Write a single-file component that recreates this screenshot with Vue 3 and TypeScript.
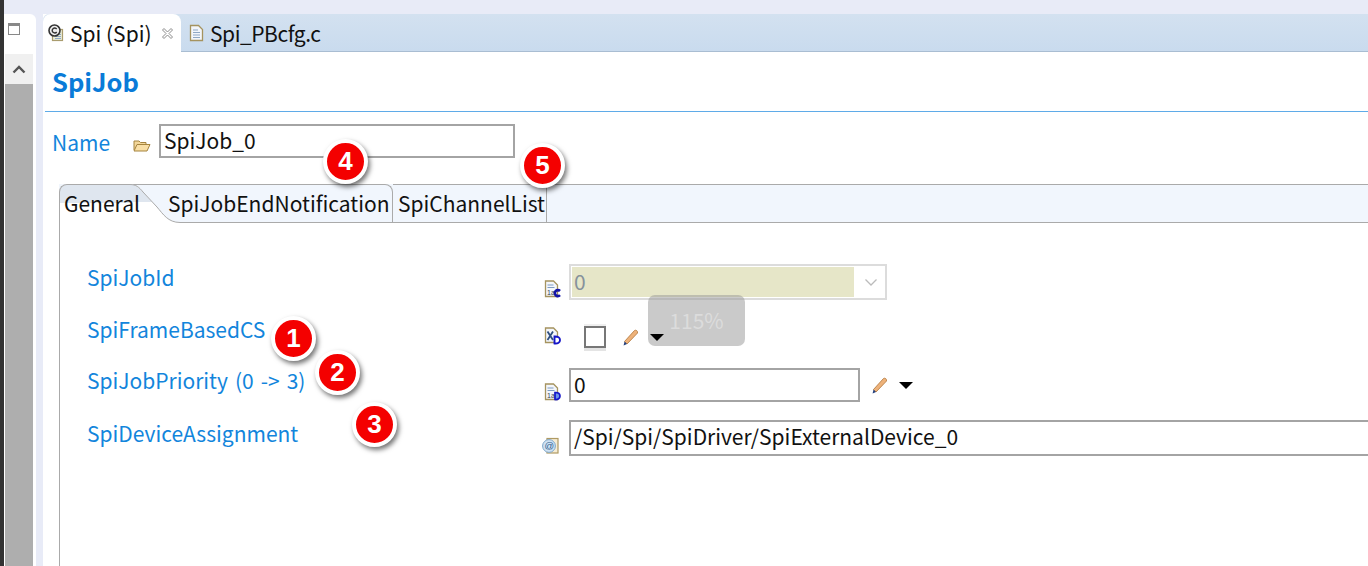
<script setup lang="ts">
const badges = [
  { n: 1, cls: 'b1' },
  { n: 2, cls: 'b2' },
  { n: 3, cls: 'b3' },
  { n: 4, cls: 'b4' },
  { n: 5, cls: 'b5' },
]
</script>

<template>
  <div class="root">
    <div class="dark"></div>
    <div class="shell">
      <div class="side">
        <div class="min"></div>
        <div class="scroll">
          <div class="sbtn">
            <svg width="14" height="9" viewBox="0 0 14 9"><path d="M1.5 7.5 7 2l5.500 5.500" fill="none" stroke="#555" stroke-width="2.400"/></svg>
          </div>
          <div class="thumb"></div>
        </div>
      </div>
      <div class="editor">
        <div class="etabs">
          <div class="etab active">
            <svg class="ico" width="17" height="18" viewBox="0 0 17 18">
              <rect x="4.500" y="5.500" width="10" height="11" fill="#e9edd8" stroke="#a99c6e" stroke-width="1.200"/>
              <path d="M7 10.500h6M7 12.500h6M7 14.500h6" stroke="#8fa7c4"/>
              <circle cx="6.500" cy="6.500" r="5.500" fill="#eee" stroke="#333" stroke-width="1.600"/>
              <path d="M8.700 5A2.500 2.500 0 1 0 8.700 8" fill="none" stroke="#333" stroke-width="1.400"/>
            </svg>
            <span class="t1">Spi (Spi)</span>
            <svg class="close" width="13" height="13" viewBox="0 0 13 13">
              <path d="M1.500 3 3 1.500l3.500 3.500L10 1.500 11.500 3 8 6.500l3.500 3.500L10 11.500 6.500 8 3 11.500 1.500 10 5 6.500z" fill="#fff" stroke="#8b8b8b"/>
            </svg>
          </div>
          <div class="etab second-etab">
            <svg class="ico" width="15" height="18" viewBox="0 0 15 18">
              <path d="M1.500 1.500h8l4 4v11h-12z" fill="#f3f6fb" stroke="#a5935f" stroke-width="1.300"/>
              <path d="M4 6h5M4 8.500h7M4 11h7M4 13.500h7" stroke="#8fa7c4"/>
            </svg>
            <span class="t1">Spi_PBcfg.c</span>
          </div>
        </div>
        <div class="body">
          <div class="title">SpiJob</div>
          <div class="name-row">
            <span class="lbl name-lbl">Name</span>
            <svg class="folder" width="18" height="13" viewBox="0 0 18 13">
              <path d="M1 11V2h5l1.500 1.500H13V6" fill="#f3d79a" stroke="#a5843f"/>
              <path d="M1 12 4 5.500h13l-3 6.500z" fill="#f9dfa6" stroke="#a5843f"/>
            </svg>
            <div class="input name-input">SpiJob_0</div>
          </div>
          <div class="folder-wrap">
            <div class="ftabs">
              <div class="ftab-active">General</div>
              <svg class="curve" width="50" height="39" viewBox="0 0 50 39">
                <path d="M0 .5H50" stroke="#aaa" fill="none"/>
                <path d="M0 .5C6 .5 9 3 13 8L27 23C33 30 38 38.500 50 38.500V39H0z" fill="#fff"/>
                <path d="M0 .5C6 .5 9 3 13 8L22 18H0z" fill="#dfe6ef"/>
                <path d="M0 .5C6 .5 9 3 13 8L27 23C33 30 38 38.500 50 38.500" fill="none" stroke="#aaa"/>
              </svg>
              <div class="ftab second">SpiJobEndNotification</div>
              <div class="ftab third">SpiChannelList</div>
              <div class="frest"></div>
            </div>
            <div class="fbody">
              <div class="form">
                <span class="lbl">SpiJobId</span>
                <svg class="pi" width="17" height="18" viewBox="0 0 17 18">
                  <path d="M1.500 1v15.500h12V5l-4-4z" fill="#f3f6fb" stroke="#a5935f" stroke-width="1.300"/>
                  <path d="M3.500 5h6M3.500 7.500h7" stroke="#7f9cc4" stroke-width="1.100"/>
                  <text x="3" y="14.500" font-size="7" fill="#345" font-family="Liberation Sans">1a</text>
                  <path d="M16 11A3 3 0 1 0 16 15.200" fill="none" stroke="#1414a8" stroke-width="2.600"/>
                </svg>
                <div class="combo">
                  <div class="combo-val">0</div>
                  <svg width="14" height="9" viewBox="0 0 14 9"><path d="M1.500 1.500 7 7l5.500-5.500" fill="none" stroke="#bbb" stroke-width="1.300"/></svg>
                </div>

                <span class="lbl">SpiFrameBasedCS</span>
                <svg class="pi pi-check" width="17" height="18" viewBox="0 0 17 18">
                  <path d="M1.500 1v14.500h12V5l-4-4z" fill="#f3f6fb" stroke="#a5935f" stroke-width="1.300"/>
                  <path d="M3.500 4.500 9 13M9 4.500 3.500 13" stroke="#2f4f7f" stroke-width="1.800"/>
                  <path d="M10.500 9.500v7c3.500.3 5.500-1 5.500-3.500S14 9.300 10.500 9.500z" fill="#fff" stroke="#1414c8" stroke-width="1.900"/>
                </svg>
                <div class="check-cell">
                  <div class="check"></div>
                  <svg class="pencil" width="16" height="17" viewBox="0 0 16 17">
                    <path d="M1.500 12.500 11.500 1.500c1.500-1 3.500.5 3 2.500L4 15z" fill="#eeb27a" stroke="#b87f45" stroke-width=".9"/>
                    <path d="M1.500 12.500 .6 16.500 4 15z" fill="#24407e"/>
                  </svg>
                  <div class="arrow top-arrow"></div>
                </div>

                <span class="lbl prio-lbl">SpiJobPriority (0 -&gt; 3)</span>
                <svg class="pi" width="17" height="18" viewBox="0 0 17 18">
                  <path d="M1.500 1v15.500h12V5l-4-4z" fill="#f3f6fb" stroke="#a5935f" stroke-width="1.300"/>
                  <path d="M3.500 5h6M3.500 7.500h7" stroke="#7f9cc4" stroke-width="1.100"/>
                  <text x="3" y="14.500" font-size="7" fill="#345" font-family="Liberation Sans">1a</text>
                  <path d="M11 9.500v7c3 .3 5-1 5-3.500S14 9.300 11 9.500z" fill="#6f96e8" stroke="#1414c8" stroke-width="1.700"/>
                </svg>
                <div class="prio-cell">
                  <div class="input prio">0</div>
                  <svg class="pencil p2" width="16" height="17" viewBox="0 0 16 17">
                    <path d="M1.500 12.500 11.500 1.500c1.500-1 3.500.5 3 2.500L4 15z" fill="#eeb27a" stroke="#b87f45" stroke-width=".9"/>
                    <path d="M1.500 12.500 .6 16.500 4 15z" fill="#24407e"/>
                  </svg>
                  <div class="arrow"></div>
                </div>

                <span class="lbl">SpiDeviceAssignment</span>
                <svg class="pi at" width="17" height="17" viewBox="0 0 17 17">
                  <rect x="5" y="1.500" width="11" height="14.500" fill="#f5ecd4" stroke="#b09a62" stroke-width="1.200"/>
                  <circle cx="7" cy="9" r="6.400" fill="#cfe2f3" stroke="#7fa6c8"/>
                  <text x="2.400" y="12.200" font-size="9.500" fill="#2f5f8f" font-family="Liberation Sans">@</text>
                </svg>
                <div class="input ref">/Spi/Spi/SpiDriver/SpiExternalDevice_0</div>
              </div>
            </div>
          </div>
        </div>
      </div>
    </div>

    <div class="zoom-hud">115%</div>
    <div v-for="b in badges" :key="b.n" class="badge" :class="b.cls">{{ b.n }}</div>
  </div>
</template>

<style>
html, body { margin: 0; overflow: hidden; }
</style>

<style scoped>
.root {
  position: relative;
  display: flex;
  width: 1368px;
  height: 566px;
  overflow: hidden;
  background: #e8ebf7;
  font-family: "Noto Sans CJK SC", "Noto Sans", sans-serif;
  color: #111;
}
.dark { width: 4px; background: #333; flex: none; }
.shell { flex: 1; display: flex; padding-top: 14px; min-width: 0; }
.side {
  width: 32px;
  margin-right: 7px;
  flex: none;
  background: #fff;
  border-radius: 0 6px 0 0;
  display: flex;
  flex-direction: column;
}
.min {
  width: 10px;
  height: 8px;
  margin: 9px 0 0 4px;
  border: 1px solid #888;
  border-top-width: 3px;
  background: #fff;
}
.scroll { margin: 19px 3px 0 1px; flex: 1; display: flex; flex-direction: column; }
.sbtn { height: 30px; background: #f0f0f0; display: flex; align-items: center; justify-content: center; }
.thumb { flex: 1; background: #aeaeae; }
.editor { flex: 1; min-width: 0; display: flex; flex-direction: column; background: #fff; }
.etabs {
  height: 38px;
  flex: none;
  display: flex;
  background: linear-gradient(#d3e1f0, #c9dbee);
  border-bottom: 1px solid #a9bdd2;
  box-sizing: border-box;
  border-radius: 6px 0 0 0;
}
.etab {
  display: flex;
  align-items: center;
  height: 38px;
  padding-left: 8px;
  font-size: 21px;
  box-sizing: border-box;
}
.etab .t1 { margin-left: 6px; }
.second-etab .t1 { margin-left: 6px; letter-spacing: -.45px; }
.etab.active { width: 138px; padding-left: 5px; background: #fff; border-radius: 8px 8px 0 0; }
.etab.active .t1 { margin-left: 5px; }
.close { margin-left: 9px; }
.body { flex: 1; display: flex; flex-direction: column; padding-left: 2px; min-height: 0; }
.title {
  height: 60px;
  flex: none;
  box-sizing: border-box;
  padding: 11px 0 0 7px;
  font-size: 25.5px;
  line-height: 36px;
  font-weight: 700;
  color: #0a7bd8;
  border-bottom: 1px solid #5fabe8;
}
.lbl { color: #1285dc; font-size: 21px; line-height: 28px; }
.form .lbl { margin-bottom: 10px; }
.prio-lbl { word-spacing: 2.300px; }
.name-row { display: flex; align-items: center; height: 34px; margin-top: 12px; padding-left: 7px; }
.name-lbl { width: 81px; margin-top: 2px; }
.folder { margin: 9px 8px 0 0; }
.input {
  box-sizing: border-box;
  border: 2px solid #a4a4a4;
  background: #fff;
  font-size: 21px;
  line-height: 28px;
  padding-left: 3px;
}
.name-input { width: 356px; height: 34px; }
.folder-wrap { margin: 26px 0 0 14px; flex: 1; display: flex; flex-direction: column; }
.ftabs { position: relative; display: flex; height: 39px; flex: none; background: #f1f6fd; }
.ftab-active {
  position: relative;
  z-index: 1;
  width: 71px;
  box-sizing: border-box;
  background: linear-gradient(#dfe6ef 0 18px, #fff 18px);
  border: 1px solid #aaa;
  border-width: 1px 0 0 1px;
  border-radius: 8px 0 0 0;
  padding-left: 4px;
  font-size: 21px;
  line-height: 37px;
  white-space: nowrap;
}
.curve { flex: none; position: relative; }
.ftab, .frest {
  border-top: 1px solid #aaa;
  border-bottom: 1px solid #aaa;
  box-sizing: border-box;
  font-size: 21px;
  line-height: 37px;
  white-space: nowrap;
}
.second {
  position: relative;
  width: 225px;
  margin-left: -12px;
  border-right: 1px solid #aaa;
  border-bottom: 0;
  padding-bottom: 1px;
  background: linear-gradient(#aaa, #aaa) 12px 100% / 100% 1px no-repeat;
  border-radius: 0 8px 0 0;
}
.third { width: 154px; padding-left: 5px; border-right: 1px solid #aaa; }
.frest { flex: 1; }
.fbody { flex: 1; border-left: 1px solid #aaa; padding: 41px 0 0 27px; }
.form {
  display: grid;
  grid-template-columns: 457px 25px 1fr;
  grid-template-rows: 36px 32px 34px 36px;
  row-gap: 18px;
  align-items: center;
}
.pi { margin-top: 14px; justify-self: start; }
.pi-check { margin-top: 4px; }
.pi.at { margin-left: -2px; }
.combo {
  width: 318px;
  height: 36px;
  box-sizing: border-box;
  border: 2px solid #dcdcdc;
  padding: 1px 0 1px 1px;
  display: flex;
  align-items: center;
  background: #fff;
}
.combo-val {
  width: 282px;
  height: 100%;
  background: #e6e6c8;
  color: #86929c;
  font-size: 21px;
  line-height: 28px;
  padding-left: 2px;
  box-sizing: border-box;
  margin-right: 10px;
}
.check-cell { display: flex; align-items: center; padding-left: 15px; margin-top: 6px; }
.check {
  width: 22px;
  height: 22px;
  box-sizing: border-box;
  border: 2px solid #777;
  background: #fff;
  box-shadow: 0 3px 0 #e4e4e4, 0 -2px 0 #f0f0f0;
}
.pencil { margin-left: 17px; flex: none; }
.p2 { margin-left: 12px; }
.arrow {
  width: 0;
  height: 0;
  margin-left: 11px;
  border-left: 7px solid transparent;
  border-right: 7px solid transparent;
  border-top: 7px solid #000;
}
.top-arrow { margin-left: 11px; position: relative; z-index: 2; }
.prio-cell { display: flex; align-items: center; }
.prio { width: 291px; height: 34px; }
.ref { height: 36px; margin-right: -3px; line-height: 29px; }
.zoom-hud {
  position: absolute;
  left: 648px;
  top: 295px;
  width: 97px;
  height: 51px;
  border-radius: 7px;
  background: rgba(150, 150, 150, .5);
  color: #dcdcdc;
  font-size: 21px;
  line-height: 50px;
  text-align: center;
}
.badge {
  position: absolute;
  width: 45px;
  height: 45px;
  box-sizing: border-box;
  border: 4px solid #fff;
  border-radius: 50%;
  background: #f40000;
  color: #fff;
  font-family: "Liberation Sans", sans-serif;
  font-weight: 700;
  font-size: 26px;
  line-height: 36px;
  text-align: center;
  box-shadow: 2px 3px 5px rgba(0, 0, 0, .55);
}
.b1 { left: 271px; top: 316px; }
.b2 { left: 315px; top: 350px; }
.b3 { left: 352px; top: 402px; }
.b4 { left: 323px; top: 139px; }
.b5 { left: 520px; top: 143px; }
</style>
